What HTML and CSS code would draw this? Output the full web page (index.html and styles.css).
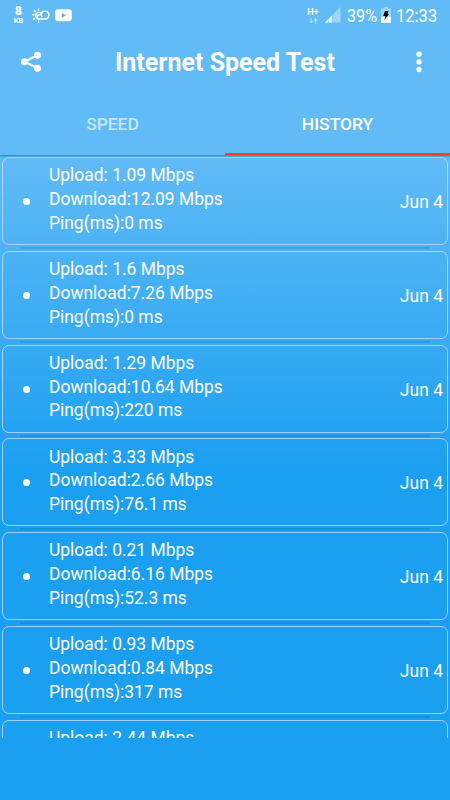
FILE: index.html
```html
<!DOCTYPE html>
<html lang="en">
<head>
<meta charset="utf-8">
<title>Internet Speed Test</title>
<link rel="stylesheet" href="styles.css">
</head>
<body>
<div class="screen">
  <div class="status">
    <div class="rate"><b>8</b><span>KB</span></div>
    <svg class="weather" width="18" height="15" viewBox="0 0 18 15" fill="none" stroke="#fff" stroke-width="1.4" stroke-linecap="round"><path d="M6.8 11H13a3.9 3.9 0 1 0-3.8-5M10 8.5A2.4 2.4 0 0 0 5.8 7.6 1.8 1.8 0 0 0 6.8 11"/><path d="M3.8 9a3.3 3.3 0 0 1 4.9-4M6.5 1v1.6M2.3 2.5l1 1.2M.7 6.8h1.2M1.5 11.2l1-.8M6.5 13v1.2"/></svg>
    <svg class="video" width="17" height="13" viewBox="0 0 17 13"><rect x=".2" y=".2" width="16.6" height="12" rx="2.6" fill="#fff"/><path d="M6.8 3.9v4.8l4.2-2.4z" fill="#4fb3f3"/></svg>
    <div class="gap"></div>
    <div class="network"><b>H+</b><svg width="9" height="6" viewBox="0 0 9 6" fill="#b5defb"><path d="M1.5 0h1.3v3h1.4L2.2 5.6.2 3h1.3zM6 5.6h1.3v-3h1.4L6.7 0l-2 2.6H6z"/></svg></div>
    <svg class="signal" width="16" height="16" viewBox="0 0 16 16"><path d="M0 15.5L15.5 0v15.5z" fill="#a1d6fa"/><path d="M0 15.5L7 8.5v7z" fill="#fff"/><path d="M3.3 11v5M7.2 7v9" stroke="#60bbf6" stroke-width=".7"/></svg>
    <span class="percent">39%</span>
    <svg class="battery" width="10" height="16" viewBox="0 0 10 16"><path d="M3 0h4v1.5h3V16H0V1.5h3z" fill="#a1d6fa"/><path d="M0 10h10v6H0z" fill="#fff"/><path d="M4 4h3.4L6.5 7H8l-4.5 6 .8-4H2.2z" fill="#000"/></svg>
    <span class="clock">12:33</span>
  </div>
  <div class="bar">
    <svg class="share" width="22" height="22" viewBox="0 0 22 22"><path d="M17.6 4L4.6 10.8l13 6.5" fill="none" stroke="#fff" stroke-width="2.1"/><g fill="#fff"><circle cx="17.5" cy="4.2" r="3.5"/><circle cx="4.4" cy="10.8" r="3.5"/><circle cx="17.5" cy="17.3" r="3.5"/></g></svg>
    <h1>Internet Speed Test</h1>
    <svg class="more" width="6" height="22" viewBox="0 0 6 22" fill="#fff"><circle cx="3" cy="3.2" r="2.7"/><circle cx="3" cy="10.9" r="2.7"/><circle cx="3" cy="18.6" r="2.7"/></svg>
  </div>
  <div class="tabs"><div class="tab">SPEED</div><div class="tab active">HISTORY</div></div>
  <div class="list">
    <div class="row"><div class="card"><i></i><p>Upload: 1.09 Mbps<br>Download:12.09 Mbps<br>Ping(ms):0 ms</p><time>Jun 4</time></div><hr></div>
    <div class="row"><div class="card"><i></i><p>Upload: 1.6 Mbps<br>Download:7.26 Mbps<br>Ping(ms):0 ms</p><time>Jun 4</time></div><hr></div>
    <div class="row"><div class="card"><i></i><p>Upload: 1.29 Mbps<br>Download:10.64 Mbps<br>Ping(ms):220 ms</p><time>Jun 4</time></div><hr></div>
    <div class="row"><div class="card"><i></i><p>Upload: 3.33 Mbps<br>Download:2.66 Mbps<br>Ping(ms):76.1 ms</p><time>Jun 4</time></div><hr></div>
    <div class="row"><div class="card"><i></i><p>Upload: 0.21 Mbps<br>Download:6.16 Mbps<br>Ping(ms):52.3 ms</p><time>Jun 4</time></div><hr></div>
    <div class="row"><div class="card"><i></i><p>Upload: 0.93 Mbps<br>Download:0.84 Mbps<br>Ping(ms):317 ms</p><time>Jun 4</time></div><hr></div>
    <div class="row"><div class="card"><i></i><p>Upload: 2.44 Mbps</p></div></div>
  </div>
</div>
</body>
</html>
```
FILE: styles.css
```css
* { box-sizing: border-box; }
body { margin: 0; font-family: Roboto, "Liberation Sans", sans-serif; color: #fff; }
.screen { height: 800px; overflow: hidden; display: flex; flex-direction: column; background: linear-gradient(#61bbf6 155px, #1a9ff1 475px); }
.status { height: 31px; display: flex; align-items: flex-start; padding: 0 12px 0 13px; flex: none; }
.rate { width: 11px; margin-top: 6px; display: flex; flex-direction: column; align-items: center; }
.rate b { font-size: 12px; line-height: 11px; font-weight: 900; }
.rate span { font-size: 7.5px; line-height: 7px; font-weight: 700; }
.weather { margin: 8px 0 0 8px; }
.video { margin: 9px 0 0 5px; }
.gap { flex: 1; }
.network { margin-top: 8px; width: 12px; display: flex; flex-direction: column; align-items: center; margin-right: 6px; }
.network b { font-size: 9px; line-height: 9px; }
.network svg { margin-top: 1px; }
.signal { margin: 7px 6px 0 0; }
.percent, .clock { font-size: 18px; line-height: 22px; margin-top: 5px; transform-origin: left; white-space: nowrap; }
.percent { width: 31px; transform: scaleX(.9); margin-right: 3px; }
.battery { margin: 7px 5px 0 0; }
.clock { width: 42px; transform: scaleX(.92); }
.bar { height: 62px; flex: none; display: flex; align-items: center; padding: 0 28px 0 20px; }
h1 { flex: 1; margin: 2px 0 0 73px; font-size: 25px; line-height: 30px; font-weight: 700; white-space: nowrap; }
.tabs { display: flex; height: 62px; flex: none; box-shadow: 0 1px 2px rgba(20, 70, 110, .6); background: #61bbf6; clip-path: inset(0 0 -4px 0); z-index: 1; }
.tab { flex: 1; text-align: center; font-size: 17.4px; line-height: 63px; font-weight: 500; color: #c5e6fc; }
.active { color: #fff; border-bottom: 2px solid #ff4308; }
.list { height: 583px; overflow: hidden; padding: 2px 2px 0; }
.row { height: 93.75px; }
.card { height: 88px; border: 1px solid rgba(205, 222, 252, .75); border-radius: 7px; display: flex; align-items: center; padding: 0 4px 0 20px; }
.card i { width: 7px; height: 7px; border-radius: 50%; background: #fff; margin-top: 1px; }
.card p { margin: 0 0 0 19px; flex: 1; font-size: 17.45px; line-height: 23.8px; align-self: flex-start; padding-top: 6.4px; }
time { font-size: 17.5px; line-height: 24px; margin-top: 2px; }
hr { border: 0; height: 2px; margin: 2px 18px 0; background: rgba(0, 70, 120, .15); }
.row:last-child .card { align-items: flex-start; }
.row:last-child i { visibility: hidden; }
```
